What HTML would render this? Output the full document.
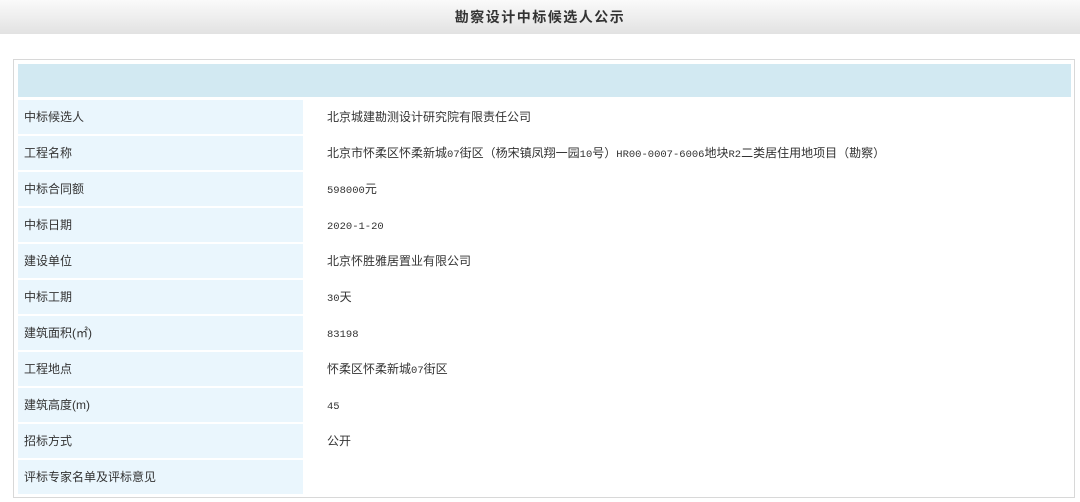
<!DOCTYPE html>
<html><head><meta charset="utf-8"><style>
*{margin:0;padding:0;box-sizing:border-box}
body{width:1080px;height:502px;background:#fff;font-family:"Liberation Sans","Noto Sans CJK SC",sans-serif;color:#333;position:relative;overflow:hidden}
.hdr{position:absolute;left:0;top:0;width:1080px;height:34px;background:linear-gradient(#fafafa,#e2e2e2);text-align:center;font-size:14px;line-height:34px;letter-spacing:1.5px;color:#333;font-weight:bold}
.box{position:absolute;left:13px;top:59px;width:1062px;height:439px;border:1px solid #d8d8d8;background:#fff}
.top{position:absolute;left:4px;top:4px;width:1053px;height:33px;background:#d2e9f2}
.row{position:absolute;left:4px;width:1053px;height:34px;font-size:12px;line-height:34px}
.l{position:absolute;left:0;top:0;width:285px;height:34px;background:#eaf6fd;padding-left:6px}
.v{position:absolute;left:309px;top:0}
.m{font-family:"Liberation Mono",monospace;font-size:10.5px}
</style></head><body>
<div class="hdr">勘察设计中标候选人公示</div>
<div class="box">
<div class="top"></div>
<div class="row" style="top:40px"><div class="l">中标候选人</div><div class="v">北京城建勘测设计研究院有限责任公司</div></div>
<div class="row" style="top:76px"><div class="l">工程名称</div><div class="v">北京市怀柔区怀柔新城<span class="m">07</span>街区（杨宋镇凤翔一园<span class="m">10</span>号）<span class="m">HR00-0007-6006</span>地块<span class="m">R2</span>二类居住用地项目（勘察）</div></div>
<div class="row" style="top:112px"><div class="l">中标合同额</div><div class="v"><span class="m">598000</span>元</div></div>
<div class="row" style="top:148px"><div class="l">中标日期</div><div class="v">&#8203;<span class="m">2020-1-20</span></div></div>
<div class="row" style="top:184px"><div class="l">建设单位</div><div class="v">北京怀胜雅居置业有限公司</div></div>
<div class="row" style="top:220px"><div class="l">中标工期</div><div class="v"><span class="m">30</span>天</div></div>
<div class="row" style="top:256px"><div class="l">建筑面积(㎡)</div><div class="v">&#8203;<span class="m">83198</span></div></div>
<div class="row" style="top:292px"><div class="l">工程地点</div><div class="v">怀柔区怀柔新城<span class="m">07</span>街区</div></div>
<div class="row" style="top:328px"><div class="l">建筑高度(m)</div><div class="v">&#8203;<span class="m">45</span></div></div>
<div class="row" style="top:364px"><div class="l">招标方式</div><div class="v">公开</div></div>
<div class="row" style="top:400px"><div class="l">评标专家名单及评标意见</div><div class="v"></div></div>
</div>
</body></html>
